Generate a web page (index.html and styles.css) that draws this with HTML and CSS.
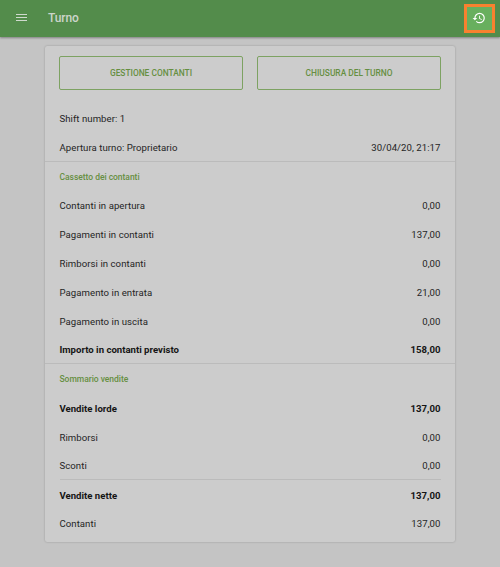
FILE: index.html
```html
<!DOCTYPE html>
<html lang="it">
    <head>
        <meta charset="UTF-8">
        <title>Turno</title>
        <link rel="stylesheet" href="styles.css">
    </head>
    <body>
        <header class="toolbar">
            <svg class="menu-icon" width="12" height="9" viewBox="0 0 12 9">
                <path d="M0 1.5H11M0 4.5H11M0 7.5H11"/>
            </svg>
            <h1>Turno</h1>
            <button class="history-button">
                <svg width="14" height="14" viewBox="0 0 24 24">
                    <path d="M13 3a9 9 0 0 0-9 9H1l3.89 3.89.07.14L9 12H6c0-3.87 3.13-7 7-7s7 3.13 7 7-3.13 7-7 7c-1.93 0-3.68-.79-4.94-2.06l-1.42 1.42A8.954 8.954 0 0 0 13 21a9 9 0 0 0 0-18zm-1 5v5l4.28 2.54.72-1.21-3.5-2.08V8H12z"/>
                </svg>
            </button>
        </header>
        <main class="card">
            <div class="actions">
                <button>GESTIONE CONTANTI</button>
                <button>CHIUSURA DEL TURNO</button>
            </div>
            <section class="shift">
                <div class="row"><span>Shift number: 1</span></div>
                <div class="row"><span>Apertura turno: Proprietario</span><span>30/04/20, 21:17</span></div>
            </section>
            <section>
                <h2>Cassetto dei contanti</h2>
                <div class="row"><span>Contanti in apertura</span><span>0,00</span></div>
                <div class="row"><span>Pagamenti in contanti</span><span>137,00</span></div>
                <div class="row"><span>Rimborsi in contanti</span><span>0,00</span></div>
                <div class="row"><span>Pagamento in entrata</span><span>21,00</span></div>
                <div class="row"><span>Pagamento in uscita</span><span>0,00</span></div>
                <div class="row total"><span>Importo in contanti previsto</span><span>158,00</span></div>
            </section>
            <section>
                <h2>Sommario vendite</h2>
                <div class="row total"><span>Vendite lorde</span><span>137,00</span></div>
                <div class="row"><span>Rimborsi</span><span>0,00</span></div>
                <div class="row"><span>Sconti</span><span>0,00</span></div>
                <div class="row total net"><span>Vendite nette</span><span>137,00</span></div>
                <div class="row"><span>Contanti</span><span>137,00</span></div>
            </section>
        </main>
    </body>
</html>
```

FILE: styles.css
```css
body {
    margin: 0;
    height: 567px;
    overflow: hidden;
    background-color: #c4c4c4;
    color: #252525;
    font-family: Roboto, sans-serif;
    font-size: 9.6px;
    letter-spacing: 0.05px;
}

.toolbar {
    display: flex;
    align-items: center;
    box-sizing: border-box;
    height: 37px;
    padding: 0 5px 1px 16px;
    background-color: #538c4b;
    box-shadow: 0 1px 2px rgba(0, 0, 0, 0.35);
}

.menu-icon {
    margin-bottom: 1px;
    fill: none;
    stroke: #d0dace;
    stroke-width: 1;
}

.toolbar h1 {
    flex-grow: 1;
    margin: 0 0 0 20px;
    color: #ccd5ca;
    font-size: 12px;
    font-weight: 500;
    letter-spacing: -0.1px;
}

.history-button {
    display: flex;
    align-items: center;
    justify-content: center;
    box-sizing: border-box;
    width: 31px;
    height: 29px;
    padding: 0 2px 1px 0;
    border: 3px solid #f9812f;
    background-color: #68af5e;
}

.history-button svg {
    fill: white;
}

.card {
    box-sizing: border-box;
    width: 410px;
    height: 496px;
    margin: 9px auto 0;
    padding-top: 10px;
    border-radius: 2px;
    background-color: #cccccc;
    box-shadow: 0 0 2px rgba(0, 0, 0, 0.25);
}

.actions {
    display: flex;
    gap: 14px;
    padding: 0 14px;
}

.actions button {
    flex: 1;
    height: 34px;
    padding: 0;
    border: 1px solid #7da262;
    border-radius: 2px;
    background: none;
    color: #668f42;
    font: 500 8.4px Roboto, sans-serif;
}

section {
    border-top: 1px solid #bbbbbb;
}

.shift {
    padding-top: 13.4px;
    border-top: 0;
}

.row,
h2 {
    display: flex;
    align-items: center;
    justify-content: space-between;
    box-sizing: border-box;
    height: 28.8px;
    margin: 0 14.5px;
}

.row {
    padding-top: 1.8px;
}

h2 {
    height: 28.6px;
    padding-top: 0.8px;
    color: #668f42;
    font-size: 8.5px;
    font-weight: 500;
    letter-spacing: -0.03px;
}

.total {
    color: #151515;
    font-weight: 700;
    letter-spacing: 0;
}

.net {
    height: 29.3px;
    border-top: 1px solid #bbbbbb;
}
```
